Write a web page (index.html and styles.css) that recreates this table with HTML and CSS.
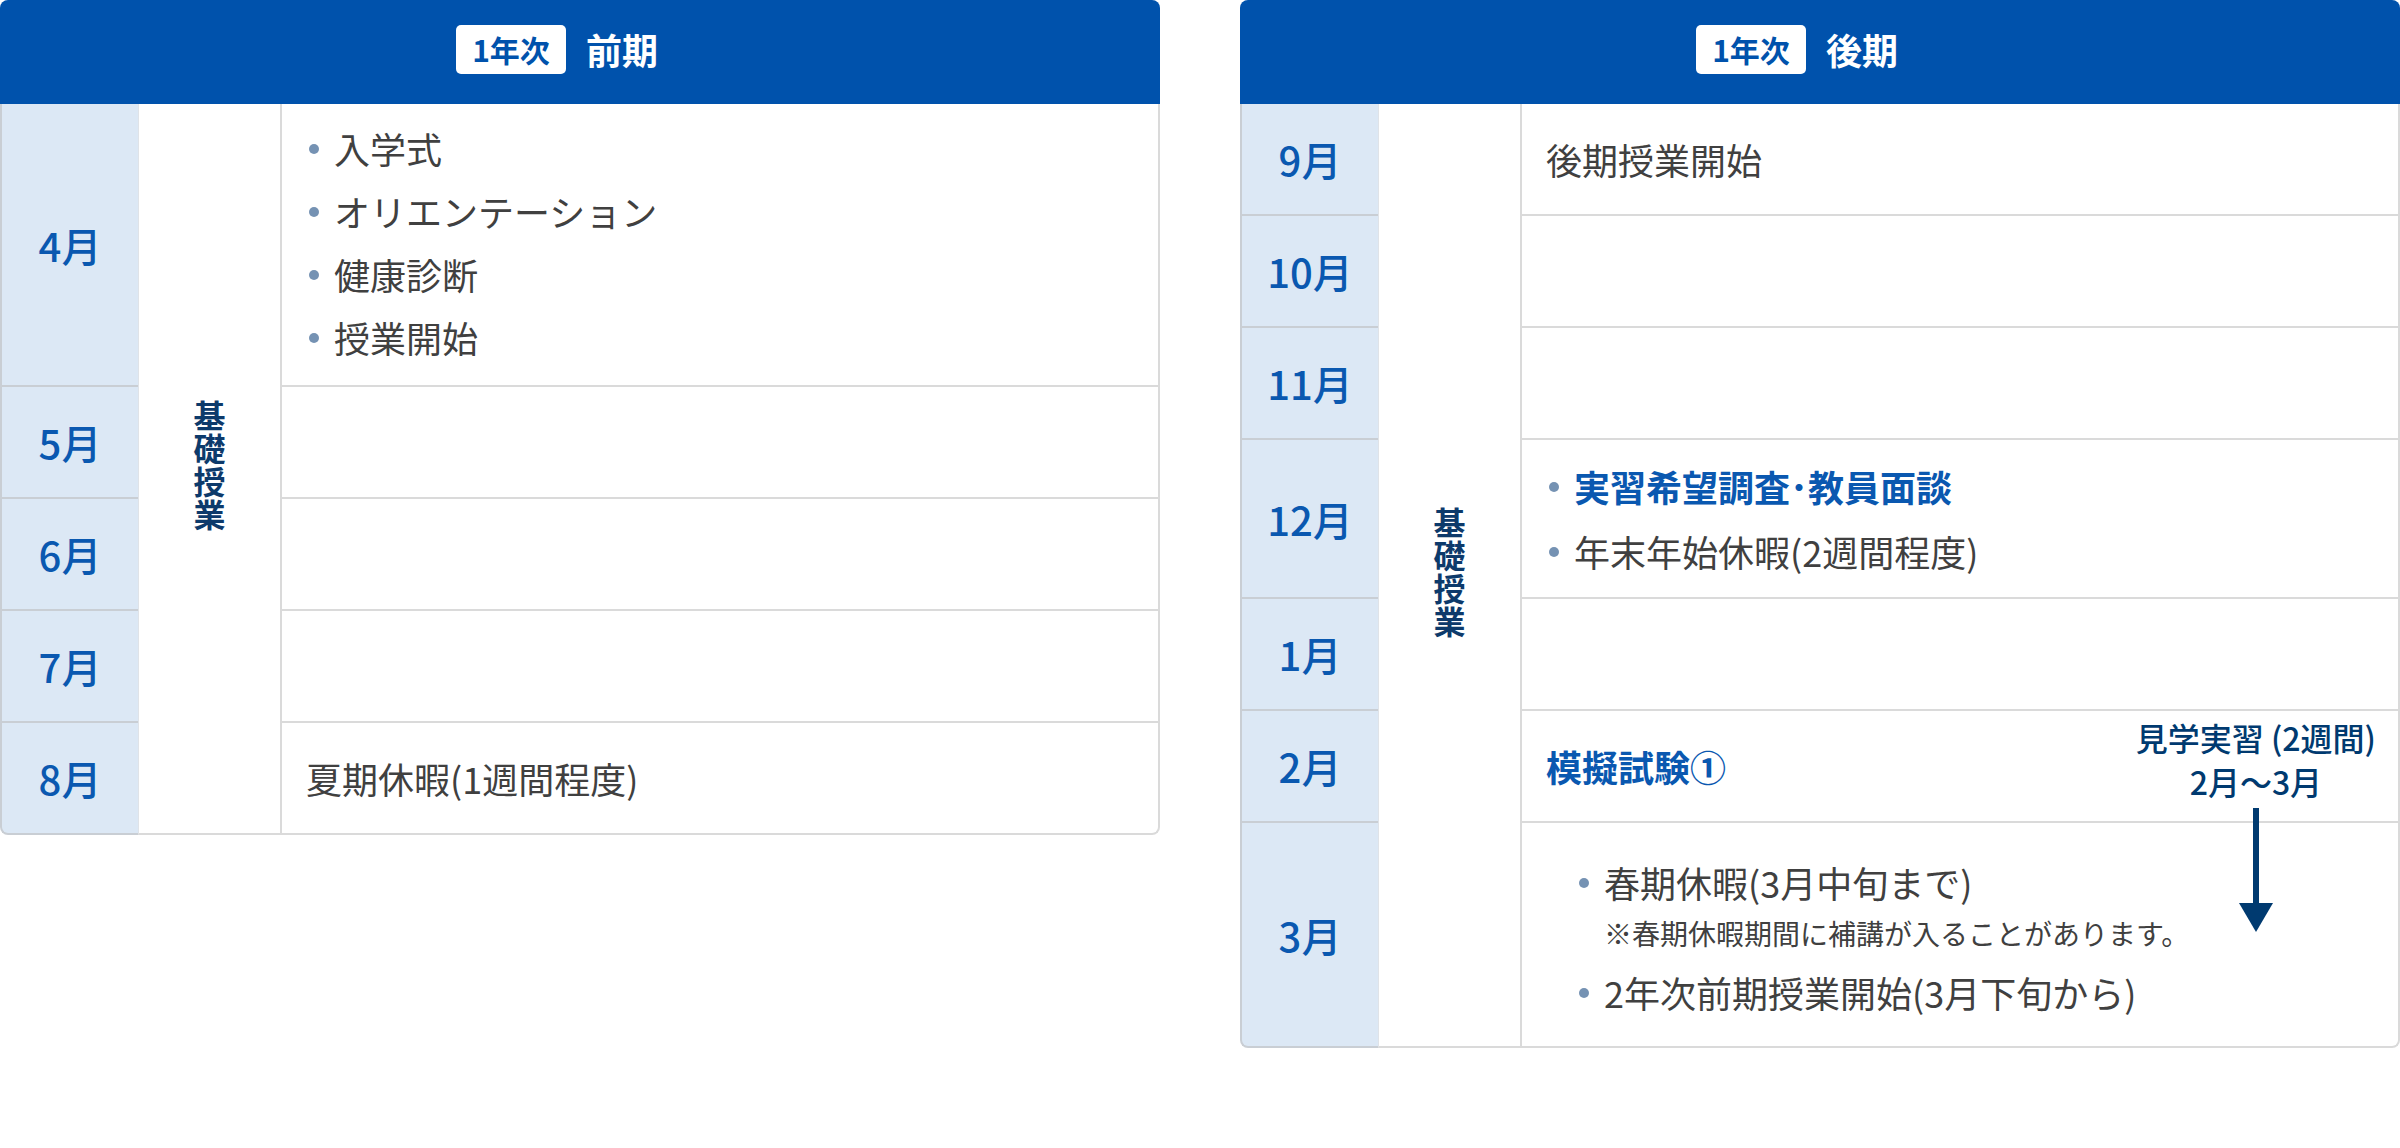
FILE: index.html
```html
<!DOCTYPE html>
<html lang="ja">
<head>
  <meta charset="UTF-8">
  <meta name="viewport" content="width=device-width, initial-scale=1.0">
  <title>1年次 年間スケジュール</title>
  <link rel="stylesheet" href="styles.css">
</head>
<body>
  <div class="schedule">

    <!-- 前期 -->
    <section class="term">
      <h2 class="term-head"><span class="term-year">1年次</span>前期</h2>
      <table class="term-table">
        <tr class="row-first">
          <th class="month">4月</th>
          <td class="basic" rowspan="5"><span class="basic-label">基礎授業</span></td>
          <td class="content">
            <ul class="events">
              <li>入学式</li>
              <li>オリエンテーション</li>
              <li>健康診断</li>
              <li>授業開始</li>
            </ul>
          </td>
        </tr>
        <tr class="row"><th class="month">5月</th><td class="content"></td></tr>
        <tr class="row"><th class="month">6月</th><td class="content"></td></tr>
        <tr class="row"><th class="month">7月</th><td class="content"></td></tr>
        <tr class="row"><th class="month">8月</th><td class="content">夏期休暇(1週間程度)</td></tr>
      </table>
    </section>

    <!-- 後期 -->
    <section class="term">
      <h2 class="term-head"><span class="term-year">1年次</span>後期</h2>
      <table class="term-table">
        <tr class="row">
          <th class="month">9月</th>
          <td class="basic" rowspan="7"><span class="basic-label">基礎授業</span></td>
          <td class="content">後期授業開始</td>
        </tr>
        <tr class="row"><th class="month">10月</th><td class="content"></td></tr>
        <tr class="row"><th class="month">11月</th><td class="content"></td></tr>
        <tr class="row-mid">
          <th class="month">12月</th>
          <td class="content">
            <ul class="events events-gap">
              <li class="em">実習希望調査･教員面談</li>
              <li>年末年始休暇(2週間程度)</li>
            </ul>
          </td>
        </tr>
        <tr class="row"><th class="month">1月</th><td class="content"></td></tr>
        <tr class="row">
          <th class="month">2月</th>
          <td class="content visit-cell">
            <span class="em">模擬試験①</span>
            <div class="visit">
              <span>見学実習 (2週間)</span>
              <span>2月～3月</span>
              <svg width="34" height="124" viewBox="0 0 34 124">
                <rect x="14" y="0" width="6" height="98" fill="#003a70"/>
                <polygon points="0,95 34,95 17,124" fill="#003a70"/>
              </svg>
            </div>
          </td>
        </tr>
        <tr class="row-tall">
          <th class="month">3月</th>
          <td class="content content-spring">
            <ul class="events events-spring">
              <li>春期休暇(3月中旬まで)<span class="note">※春期休暇期間に補講が入ることがあります。</span></li>
              <li>2年次前期授業開始(3月下旬から)</li>
            </ul>
          </td>
        </tr>
      </table>
    </section>

  </div>
</body>
</html>
```

FILE: styles.css
```css
body {
  margin: 0;
  font-family: "Noto Sans CJK JP", "Noto Sans", sans-serif;
  color: #404040;
  background: #fff;
}
.schedule {
  display: flex;
  align-items: flex-start;
  gap: 80px;
}
.term {
  width: 1160px;
}
.term-head {
  margin: 0;
  height: 104px;
  box-sizing: border-box;
  padding: 0 46px 6px 0;
  display: flex;
  align-items: center;
  justify-content: center;
  gap: 20px;
  background: #0052ac;
  border-radius: 8px 8px 0 0;
  color: #fff;
  font-size: 36px;
  font-weight: 700;
}
.term-year {
  display: flex;
  align-items: center;
  justify-content: center;
  width: 110px;
  height: 49px;
  border-radius: 5px;
  background: #fff;
  color: #0052ac;
  font-size: 30px;
  font-weight: 700;
}
.term-table {
  width: 100%;
  border-collapse: separate;
  border-spacing: 0;
  table-layout: fixed;
}
.term-table th,
.term-table td {
  box-sizing: border-box;
  padding: 0;
  vertical-align: middle;
}
.row {
  height: 112px;
}
.row-mid {
  height: 159px;
}
.row-tall {
  height: 224px;
}
.month {
  width: 138px;
  background: #dce8f5;
  border-left: 2px solid #c9ced4;
  border-bottom: 2px solid #c9ced4;
  color: #0a58b0;
  font-size: 40px;
  font-weight: 500;
  text-align: center;
}
.basic {
  width: 142px;
  border-left: 1px solid #dfe3e8;
  border-bottom: 2px solid #dadada;
  text-align: center;
}
.basic-label {
  display: inline-block;
  writing-mode: vertical-rl;
  color: #0d3a6b;
  font-size: 32px;
  font-weight: 700;
  letter-spacing: 1px;
}
.term-table .content {
  padding: 0 24px;
  border-left: 2px solid #dadada;
  border-right: 2px solid #dadada;
  border-bottom: 2px solid #dadada;
  font-size: 36px;
  line-height: 62px;
}
.term-table tr:last-child .month {
  border-bottom-left-radius: 8px;
}
.term-table tr:last-child .content {
  border-bottom-right-radius: 8px;
}
.term-table .row-first .content {
  padding: 13px 24px 16px;
}
.events {
  list-style: none;
  margin: 0;
  padding: 0;
}
.events li {
  position: relative;
  padding-left: 28px;
  line-height: 63px;
}
.events-gap li + li {
  margin-top: 2px;
}
.events li::before {
  content: "";
  position: absolute;
  left: 3px;
  top: 27px;
  width: 10px;
  height: 10px;
  border-radius: 50%;
  background: #7592b3;
}
.em {
  color: #0a58b0;
  font-weight: 700;
}
.visit-cell {
  position: relative;
}
.visit {
  position: absolute;
  top: 4px;
  right: 22px;
  display: flex;
  flex-direction: column;
  align-items: center;
  color: #003a70;
  font-size: 32px;
  font-weight: 500;
  line-height: 44px;
}
.visit svg {
  margin-top: 5px;
}
.term-table .content-spring {
  padding: 28px 24px 22px;
}
.events-spring {
  padding-left: 30px;
}
.events-spring li + li {
  margin-top: 9px;
}
.note {
  display: block;
  font-size: 28px;
  line-height: 38px;
}
```
